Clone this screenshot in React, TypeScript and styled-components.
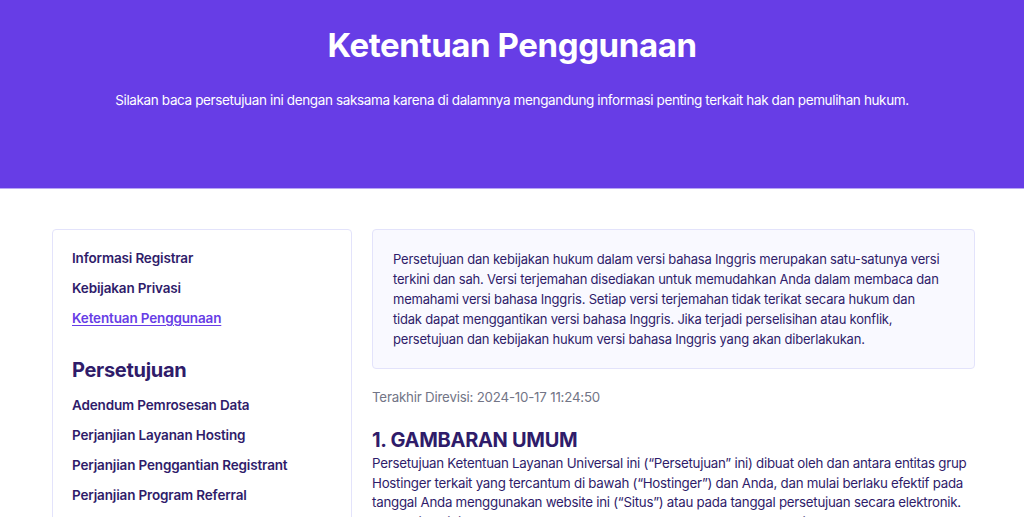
import React from "react";
import styled, { createGlobalStyle } from "styled-components";

const Global = createGlobalStyle`
  * { box-sizing: border-box; }
  html, body { margin: 0; padding: 0; background: #ffffff; }
  body { font-family: "Inter", "Noto Sans", sans-serif; color: #2f1c6a; }
`;

const Hero = styled.header`
  background: #673de6;
  height: 189px;
  border-bottom: 1px solid #b9a6f5;
  display: flex;
  flex-direction: column;
  align-items: center;
  padding-top: 23px;
  color: #ffffff;
  text-align: center;
`;

const Title = styled.h1`
  margin: 0;
  font-size: 33px;
  line-height: 44px;
  font-weight: 700;
  letter-spacing: -0.4px;
`;

const Subtitle = styled.p`
  margin: 21px 0 0;
  font-size: 13.5px;
  line-height: 24px;
  font-weight: 400;
  letter-spacing: -0.37px;
`;

const Main = styled.main`
  display: flex;
  gap: 20px;
  width: 923px;
  margin: 40px 49px 0 52px;
  align-items: flex-start;
`;

const Sidebar = styled.nav`
  width: 300px;
  flex-shrink: 0;
  border: 1px solid #e3e3fb;
  border-radius: 4px;
  padding: 18px 19px 20px 19px;
  display: flex;
  flex-direction: column;
`;

const NavItem = styled.a<{ $active?: boolean }>`
  display: block;
  font-size: 13.5px;
  line-height: 20px;
  font-weight: 600;
  letter-spacing: -0.15px;
  margin-bottom: 10px;
  color: ${(p) => (p.$active ? "#673de6" : "#2f1c6a")};
  text-decoration: ${(p) => (p.$active ? "underline" : "none")};
  text-underline-offset: 2px;
  cursor: pointer;
`;

const NavHeading = styled.h2`
  margin: 17px 0 10px;
  font-size: 20px;
  line-height: 30px;
  font-weight: 700;
  letter-spacing: -0.3px;
  color: #2f1c6a;
`;

const Content = styled.article`
  flex: 1;
  min-width: 0;
`;

const Notice = styled.div`
  background: #f9f9ff;
  border: 1px solid #e3e3fb;
  border-radius: 4px;
  padding: 19px 22px 19px 20px;
  font-size: 13px;
  line-height: 20px;
  letter-spacing: -0.2px;
  color: #2f1c6a;
`;

const Revised = styled.p`
  margin: 18px 0 0;
  font-size: 13.3px;
  line-height: 20px;
  letter-spacing: -0.2px;
  color: #727586;
`;

const SectionTitle = styled.h3`
  margin: 19px 0 0;
  font-size: 20px;
  line-height: 28px;
  font-weight: 700;
  letter-spacing: -0.3px;
  color: #2f1c6a;
`;

const Para = styled.p`
  margin: 0;
  font-size: 13.3px;
  line-height: 19.5px;
  letter-spacing: -0.25px;
  color: #2f1c6a;
`;

export default function App() {
  return (
    <>
      <Global />
      <Hero>
        <Title>Ketentuan Penggunaan</Title>
        <Subtitle>
          Silakan baca persetujuan ini dengan saksama karena di dalamnya mengandung informasi penting terkait hak dan pemulihan hukum.
        </Subtitle>
      </Hero>
      <Main>
        <Sidebar>
          <NavItem>Informasi Registrar</NavItem>
          <NavItem>Kebijakan Privasi</NavItem>
          <NavItem $active>Ketentuan Penggunaan</NavItem>
          <NavHeading>Persetujuan</NavHeading>
          <NavItem>Adendum Pemrosesan Data</NavItem>
          <NavItem>Perjanjian Layanan Hosting</NavItem>
          <NavItem>Perjanjian Penggantian Registrant</NavItem>
          <NavItem>Perjanjian Program Referral</NavItem>
          <NavItem>Perjanjian Pendaftaran Domain</NavItem>
          <NavItem>Kebijakan Pengembalian Dana</NavItem>
        </Sidebar>
        <Content>
          <Notice>
            Persetujuan dan kebijakan hukum dalam versi bahasa Inggris merupakan satu-satunya versi terkini dan sah. Versi terjemahan disediakan untuk memudahkan Anda dalam membaca dan memahami versi bahasa Inggris. Setiap versi terjemahan tidak terikat secara hukum dan tidak{"\u00a0"}dapat menggantikan versi bahasa Inggris. Jika terjadi perselisihan atau konflik, persetujuan dan kebijakan hukum versi bahasa Inggris yang akan diberlakukan.
          </Notice>
          <Revised>Terakhir Direvisi: 2024-10-17 11:24:50</Revised>
          <SectionTitle>1. GAMBARAN UMUM</SectionTitle>
          <Para>
            Persetujuan Ketentuan Layanan Universal ini (“Persetujuan” ini) dibuat oleh dan antara entitas grup Hostinger terkait yang tercantum di bawah (“Hostinger”) dan Anda, dan mulai berlaku efektif pada tanggal Anda menggunakan website ini (“Situs”) atau pada tanggal persetujuan secara elektronik. Persetujuan ini menetapkan syarat dan ketentuan umum penggunaan Situs dan layanan yang ditawarkan oleh Hostinger.
          </Para>
        </Content>
      </Main>
    </>
  );
}
